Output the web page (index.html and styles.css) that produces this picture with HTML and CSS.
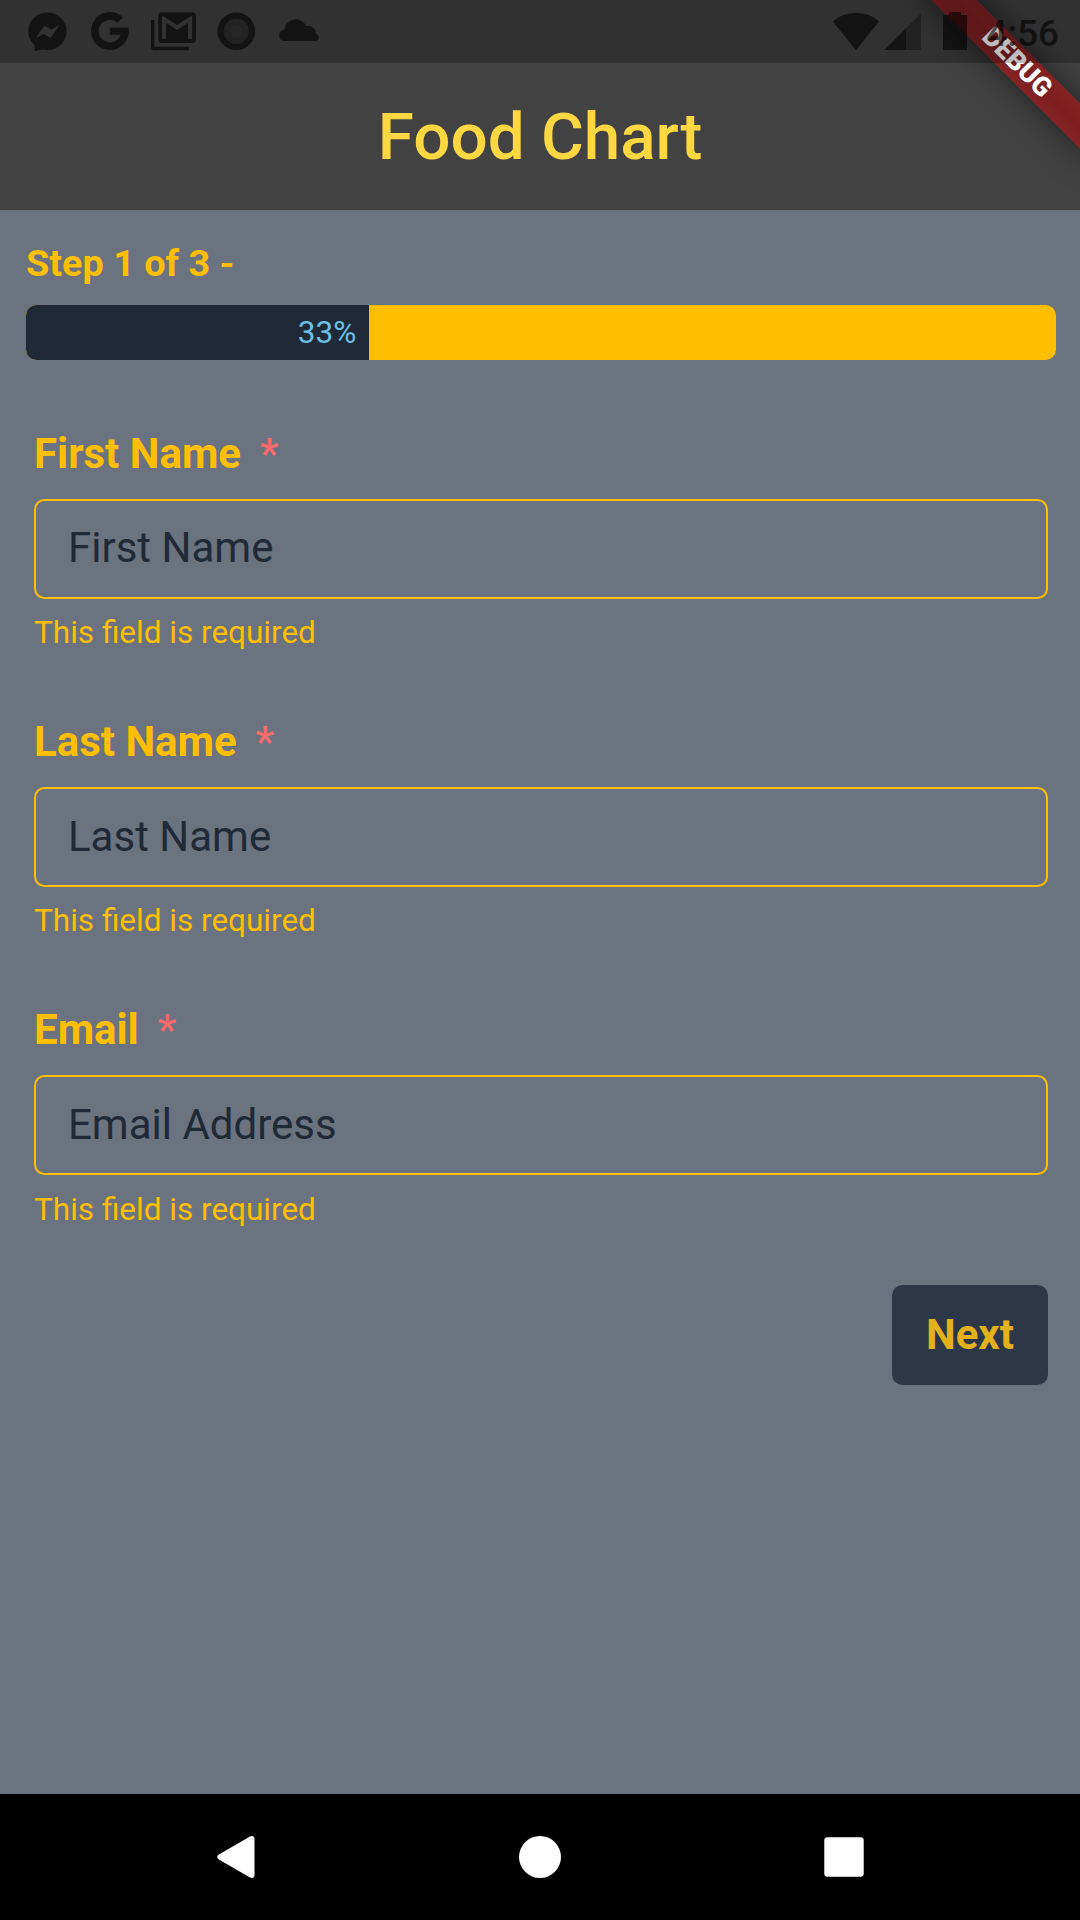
FILE: index.html
```html
<!DOCTYPE html>
<html lang="en">
<head>
<meta charset="utf-8">
<title>Food Chart</title>
<link rel="stylesheet" href="styles.css">
</head>
<body>
<div class="screen">
  <div class="status-bar">
    <svg class="notification" viewBox="0 0 63 63"><path fill-rule="evenodd" d="M31.3 12.4a19 18.8 0 1 1-4.5 37l-7.6 1.5q-.8-.1-.7-1.2v-4.6A19 18.8 0 0 1 31.3 12.4zM19.7 38.2q5-2.5 7.8-4.3l5.5 3.4q1.4.6 2.7-.6l7.6-11.4q-4.400 2.200-7.800 4.300l-5.500-3.100q-1.600-.6-2.900.8z"/></svg>
    <svg class="notification" viewBox="0 0 63 63"><path class="stroke" d="M41.300 20.100A15.100 15.100 0 1 0 46 31.200"/><path d="M30.800 27.700h18.800q.4 3.500-.1 7H30.800z"/></svg>
    <svg class="notification" viewBox="0 0 63 63"><path fill-rule="evenodd" d="M20.300 12.300h29.700q4 0 4 4V39q0 4-4 4H20.300q-4 0-4-4V16.300q0-4 4-4zM20 39h4V22.700l11.200 7.300L46 22.700V39h4.200V16.200h-1.500L35.200 25 21.500 16.200H20z"/><path d="M9 20h3.400v26.700h34.300v3.600H12q-3 0-3-3z"/></svg>
    <svg class="notification" viewBox="0 0 63 63"><path fill-rule="evenodd" d="M31.300 12.500a18.800 18.800 0 1 1 0 37.600 18.800 18.800 0 1 1 0-37.600zm0 6.300a12.500 12.500 0 1 0 0 25 12.500 12.500 0 1 0 0-25z"/><circle class="dim" cx="31.300" cy="31.300" r="9.200"/><circle class="dimmer" cx="31.300" cy="31.300" r="5.800"/></svg>
    <svg class="notification" viewBox="0 0 63 63"><path d="M16.300 41a5.700 5.700 0 0 1-.2-11.300A11.600 11.600 0 0 1 38.300 26.300a7.500 7.500 0 0 1 9.700 7.500A3.800 3.800 0 0 1 48.300 41z"/></svg>
    <div class="system">
      <svg class="wifi" viewBox="0 0 48 63"><path d="M.7 21.300Q10.500 13 24 13t23.200 8.300L24 50.300z"/></svg>
      <svg class="signal" viewBox="0 0 38 63"><path d="M.3 50 22 28.300V50z"/><path class="faint" d="M22 28.300 37 13.300V50H22z"/></svg>
      <svg class="battery" viewBox="0 0 24 63"><path d="M0 15h6v-3h12v3h6v35H0z"/></svg>
      <span class="clock">4:56</span>
    </div>
  </div>
  <div class="ribbon-area"><div class="ribbon">DEBUG</div></div>

  <header class="app-bar"><h1 class="title">Food Chart</h1></header>

  <main class="content">
    <p class="step">Step 1 of 3 -</p>
    <div class="progress"><div class="progress-fill" style="width: 33.33%">33%</div></div>
    <form class="form">
      <div class="field">
        <label class="label" for="first">First Name<span class="star">*</span></label>
        <input class="input" id="first" type="text" placeholder="First Name">
        <p class="help">This field is required</p>
      </div>
      <div class="field">
        <label class="label" for="last">Last Name<span class="star">*</span></label>
        <input class="input" id="last" type="text" placeholder="Last Name">
        <p class="help">This field is required</p>
      </div>
      <div class="field">
        <label class="label" for="email">Email<span class="star">*</span></label>
        <input class="input" id="email" type="text" placeholder="Email Address">
        <p class="help">This field is required</p>
      </div>
      <button class="next" type="button">Next</button>
    </form>
  </main>

  <nav class="nav-bar">
    <svg class="nav-icon" viewBox="0 0 42 42"><path d="M2 18.800 33.500.5Q37-1 38 2.200v37.600q-1 3.200-4.500 1.700L2 23.200q-2.600-2.200 0-4.400z" transform="translate(1.500 0)"/></svg>
    <svg class="nav-icon" viewBox="0 0 42 42"><circle cx="21" cy="21" r="21"/></svg>
    <svg class="nav-icon" viewBox="0 0 42 42"><rect x="1.300" y="1.300" width="39.400" height="39.400" rx="3"/></svg>
  </nav>
</div>
</body>
</html>
```
FILE: styles.css
```css
* { box-sizing: border-box; margin: 0; padding: 0; }

body { font-family: Roboto, sans-serif; }

.screen {
  position: relative;
  display: flex;
  flex-direction: column;
  width: 1080px;
  height: 1920px;
  overflow: hidden;
  background: #6b7280;
}

/* translucent system bar over the app bar */
.status-bar {
  position: absolute;
  inset: 0 0 auto;
  z-index: 2;
  display: flex;
  height: 63px;
  padding: 0 21px 0 16px;
  background: rgba(0, 0, 0, .25);
}
.status-bar svg { height: 63px; opacity: .6; }
.notification { width: 63px; }
.stroke { fill: none; stroke: #000; stroke-width: 7.6; }
.dim { fill: none; stroke: #000; stroke-width: 6.800; opacity: .48; }
.dimmer { opacity: .35; }
.faint { opacity: .48; }
.system { display: flex; margin-left: auto; }
.wifi { width: 48px; margin-right: 4px; }
.signal { width: 38px; margin-right: 21px; }
.battery { width: 24px; margin-right: 19px; }
.clock {
  color: rgba(0, 0, 0, .6);
  font-size: 37px;
  font-weight: 500;
  line-height: 67px;
}

.ribbon-area {
  position: absolute;
  top: 0;
  right: 0;
  z-index: 1;
  width: 210px;
  height: 210px;
  overflow: hidden;
}
.ribbon {
  position: absolute;
  top: 47px;
  left: 27px;
  width: 240px;
  height: 31.5px;
  transform: rotate(45deg);
  background: linear-gradient(#842224, #7f1e20, #842224);
  box-shadow: 0 0 32px rgba(0, 0, 0, .5);
  color: #fff;
  font-size: 26.8px;
  font-weight: 900;
  line-height: 31.5px;
  text-align: center;
}

.app-bar {
  display: flex;
  align-items: center;
  justify-content: center;
  height: 210px;
  padding-top: 63px;
  background: #424242;
}
.title { color: #ffd740; font-size: 65.625px; font-weight: 500; line-height: 76px; }

.content { flex: 1; padding: 32px 24px 0 26px; }
.step { color: #ffbf00; font-size: 37.8px; font-weight: 700; line-height: 42px; }
.progress {
  height: 55px;
  margin-top: 21px;
  overflow: hidden;
  border-radius: 10.500px;
  background: #ffbf00;
}
.progress-fill {
  height: 55px;
  padding-right: 13px;
  background: #1f2937;
  color: #6cc1e8;
  font-size: 31.500px;
  line-height: 55px;
  text-align: right;
}

.form { display: flex; flex-direction: column; padding: 70px 8px 0; }
.field { display: flex; flex-direction: column; height: 288px; }
.label { color: #ffbf00; font-size: 42px; font-weight: 700; line-height: 48px; }
.star { margin-left: 19px; color: #f76b6b; font-weight: 500; }
.input {
  height: 100px;
  margin-top: 21px;
  padding: 0 32px 2px;
  border: 2px solid #ffbf00;
  border-radius: 10.500px;
  background: transparent;
  font: 42px Roboto, sans-serif;
}
.field:first-child .input { padding-bottom: 4px; }
.input::placeholder { color: #1f2937; opacity: 1; }
.help { margin-top: 15px; color: #ffbf00; font-size: 31.500px; line-height: 37px; }
.field:nth-child(3) .help { margin-top: 16px; }
.next {
  align-self: flex-end;
  width: 156px;
  height: 100px;
  margin-top: -9px;
  padding-bottom: 2px;
  border: 0;
  border-radius: 10.500px;
  background: #2d3748;
  color: #e2b11b;
  font: 700 42px Roboto, sans-serif;
}

.nav-bar {
  display: flex;
  align-items: center;
  justify-content: space-between;
  height: 126px;
  padding: 0 215px;
  background: #000;
}
.nav-icon { width: 42px; height: 42px; fill: #fff; }
```
